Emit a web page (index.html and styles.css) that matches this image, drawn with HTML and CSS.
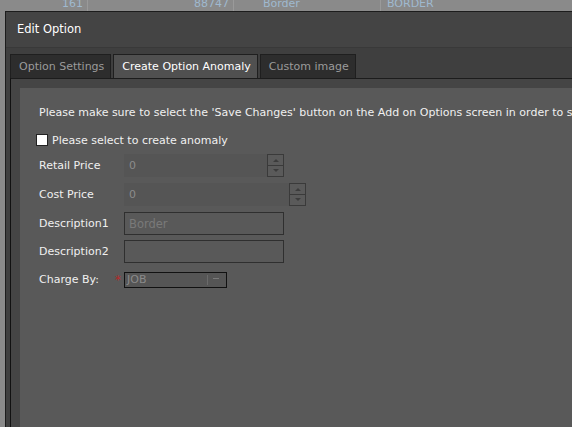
FILE: index.html
```html
<!DOCTYPE html>
<html lang="en">
<head>
    <meta charset="UTF-8">
    <title>Edit Option</title>
    <link rel="stylesheet" href="styles.css">
</head>
<body>

<div class="grid-row">
    <div class="cell cell-id">161</div>
    <div class="cell cell-num">88747</div>
    <div class="cell cell-desc">Border</div>
    <div class="cell cell-code">BORDER</div>
</div>

<div class="dialog">
    <div class="dialog-title">Edit Option</div>

    <div class="tabs">
        <div class="tab">Option Settings</div>
        <div class="tab active">Create Option Anomaly</div>
        <div class="tab">Custom image</div>
    </div>

    <div class="tab-panel">
        <div class="panel-body">
            <p class="notice">Please make sure to select the 'Save Changes' button on the Add on Options screen in order to save your changes.</p>

            <label class="check-row">
                <span class="checkbox"></span>
                Please select to create anomaly
            </label>

            <div class="form-row">
                <span class="label">Retail Price</span>
                <div class="spin spin-retail">
                    <input type="text" value="0" disabled>
                    <div class="spin-btns">
                        <span class="spin-up"></span>
                        <span class="spin-down"></span>
                    </div>
                </div>
            </div>

            <div class="form-row">
                <span class="label">Cost Price</span>
                <div class="spin spin-cost">
                    <input type="text" value="0" disabled>
                    <div class="spin-btns">
                        <span class="spin-up"></span>
                        <span class="spin-down"></span>
                    </div>
                </div>
            </div>

            <div class="form-row">
                <span class="label">Description1</span>
                <input class="text-field" type="text" value="Border" disabled>
            </div>

            <div class="form-row row-tight">
                <span class="label">Description2</span>
                <input class="text-field" type="text" value="" disabled>
            </div>

            <div class="form-row row-charge">
                <span class="label">Charge By:</span>
                <span class="required">*</span>
                <div class="select">
                    <span class="select-value">JOB</span>
                    <span class="select-arrow"></span>
                </div>
            </div>
        </div>
    </div>
</div>

</body>
</html>
```

FILE: styles.css
```css
body {
    margin: 0;
    background-color: #8a8a8a;
    font-family: "DejaVu Sans", Verdana, sans-serif;
    font-size: 11px;
    color: #f0f0f0;
    overflow: hidden;
    height: 427px;
}

.grid-row {
    display: flex;
    height: 11px;
    line-height: 7px;
    color: #9fb9cf;
    font-size: 11px;
    overflow: hidden;
}
.cell {
    flex-shrink: 0;
    border-right: 1px solid #9a9a9a;
    box-sizing: border-box;
    padding: 0 6px;
}
.cell-id { width: 88px; text-align: right; padding-right: 4px; }
.cell-num { width: 146px; text-align: right; padding-right: 4px; }
.cell-desc { width: 147px; padding-left: 29px; }
.cell-code { width: 200px; padding-left: 6px; border-right: none; }

.dialog {
    margin-left: 5px;
    width: 620px;
    height: 440px;
    background-color: #3f3f3f;
    border: 1px solid #1c1c1c;
    border-right: none;
}

.dialog-title {
    height: 35px;
    line-height: 34px;
    padding-left: 11px;
    font-size: 11.5px;
    color: #ffffff;
    background-color: #444444;
    border-bottom: 1px solid #393939;
}

.tabs {
    display: flex;
    gap: 2px;
    padding: 6px 0 0 4px;
}
.tab {
    height: 23px;
    line-height: 23px;
    padding: 0 6px 0 8px;
    background-color: #2d2d2d;
    border: 1px solid #1f1f1f;
    border-bottom: none;
    color: #9b9b9b;
}
.tab.active {
    background-color: #505050;
    color: #ffffff;
}

.tab-panel {
    margin-left: 4px;
    border-top: 1px solid #1c1c1c;
    border-left: 1px solid #111111;
    background-color: #454545;
    padding: 9px 0 0 9px;
    height: 340px;
}

.panel-body {
    background-color: #595959;
    height: 340px;
    padding: 18px 0 0 19px;
    white-space: nowrap;
}

.notice {
    margin: 0 0 13px 0;
}

.check-row {
    display: flex;
    align-items: center;
    gap: 4px;
    margin-left: -3px;
    height: 16px;
}
.checkbox {
    width: 10px;
    height: 10px;
    background-color: #ffffff;
    border: 1px solid #222222;
}

.form-row {
    display: flex;
    align-items: center;
    height: 23px;
    margin-top: 6px;
}
.form-row.row-tight {
    margin-top: 5px;
}
.label {
    width: 85px;
}

.spin {
    display: flex;
    height: 23px;
}
.spin input {
    box-sizing: border-box;
    height: 23px;
    border: none;
    background-color: #555555;
    color: #8c8c8c;
    font-family: inherit;
    font-size: 11px;
    padding: 0 5px;
}
.spin-retail input { width: 143px; }
.spin-cost input { width: 165px; }
.spin-btns {
    display: flex;
    flex-direction: column;
    width: 17px;
    border: 1px solid #3a3a3a;
    box-sizing: border-box;
}
.spin-up, .spin-down {
    flex: 1;
    position: relative;
    background-color: #5a5a5a;
}
.spin-up { border-bottom: 1px solid #3a3a3a; }
.spin-up::after, .spin-down::after {
    content: "";
    position: absolute;
    left: 5px;
    top: 4px;
    border-left: 3px solid transparent;
    border-right: 3px solid transparent;
}
.spin-up::after { border-bottom: 3px solid #3c3c3c; }
.spin-down::after { border-top: 3px solid #3c3c3c; top: 3px; }

.text-field {
    box-sizing: border-box;
    width: 160px;
    height: 23px;
    border: 1px solid #2f2f2f;
    background-color: #595959;
    color: #7a7a7a;
    font-family: inherit;
    font-size: 11.5px;
    padding: 0 4px;
}

.row-charge {
    margin-top: 5px;
}
.row-charge .label {
    width: 76px;
}
.required {
    color: #b22a2a;
    width: 9px;
    font-size: 12px;
}
.select {
    box-sizing: border-box;
    display: flex;
    align-items: center;
    width: 103px;
    height: 16px;
    border: 1px solid #111111;
    background-color: #555555;
    color: #8a8a8a;
}
.select-value {
    flex: 1;
    padding-left: 2px;
}
.select-arrow {
    width: 18px;
    height: 10px;
    border-left: 1px solid #6a6a6a;
    position: relative;
}
.select-arrow::after {
    content: "";
    position: absolute;
    left: 5px;
    top: 3px;
    width: 6px;
    height: 1px;
    background-color: #7a7a7a;
}
```
